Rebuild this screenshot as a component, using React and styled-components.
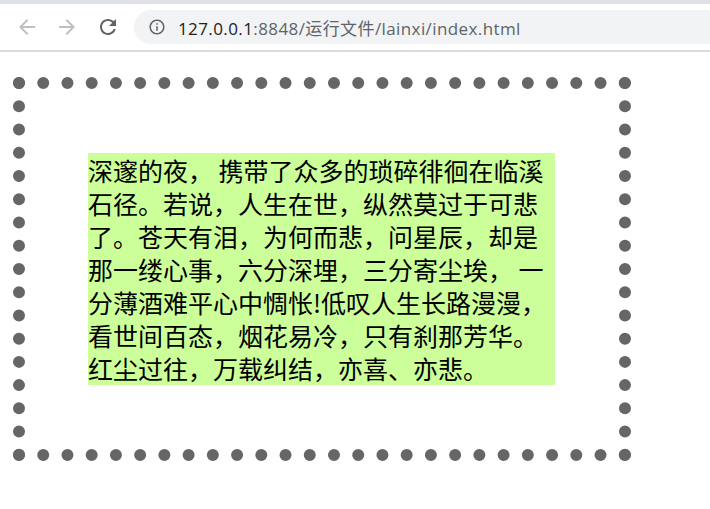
import React from 'react';
import styled, { createGlobalStyle } from 'styled-components';

const GlobalStyle = createGlobalStyle`
  html, body {
    margin: 0;
    padding: 0;
    background: #fff;
  }
  body {
    font-family: "Noto Sans CJK SC", "Noto Sans", sans-serif;
  }
`;

const Chrome = styled.header`
  border-top: 4px solid #dee1e6;
  border-bottom: 2px solid #dadce0;
  background: #fff;
`;

const Toolbar = styled.div`
  display: flex;
  align-items: center;
  height: 46px;
  padding-left: 15px;
`;

const NavButton = styled.span`
  display: flex;
  align-items: center;
  justify-content: center;
  width: 24px;
  height: 24px;
  margin-right: ${({ $gap }) => $gap}px;
  color: ${({ $disabled }) => ($disabled ? '#bdc1c6' : '#5f6368')};

  svg {
    display: block;
    width: 24px;
    height: 24px;
    fill: currentColor;
  }
`;

const Omnibox = styled.div`
  flex: 1;
  display: flex;
  align-items: center;
  gap: 12px;
  height: 34px;
  padding-left: 14px;
  border-radius: 17px 0 0 17px;
  background: #f1f3f4;
  color: #5f6368;

  svg {
    display: block;
    width: 18px;
    height: 18px;
    fill: currentColor;
  }
`;

const Url = styled.span`
  font-family: "Open Sans", "Noto Sans CJK SC", sans-serif;
  font-size: 17px;
  letter-spacing: 0.4px;
  color: #5f6368;
  white-space: nowrap;

  b {
    font-weight: 400;
    color: #202124;
  }
`;

const Page = styled.main`
  padding: 25px 0 0 13px;
`;

const DottedFrame = styled.div`
  width: 467px;
  padding: 64px 64px 64px 63px;
  border: 12px dotted #666;
`;

const Passage = styled.p`
  margin: 0;
  height: 232px;
  padding-top: 1px;
  box-sizing: border-box;
  background: #ccff99;
  color: #000;
  font-family: "Noto Sans CJK SC", sans-serif;
  font-size: 25px;
  line-height: 33px;
`;

const BackIcon = () => (
  <svg viewBox="0 0 24 24">
    <path d="M20 11H7.83l5.59-5.59L12 4l-8 8 8 8 1.41-1.41L7.83 13H20v-2z" />
  </svg>
);

const ForwardIcon = () => (
  <svg viewBox="0 0 24 24">
    <path d="M4 11h12.17l-5.59-5.59L12 4l8 8-8 8-1.41-1.41L16.17 13H4v-2z" />
  </svg>
);

const ReloadIcon = () => (
  <svg viewBox="0 0 24 24">
    <path d="M17.65 6.35C16.2 4.9 14.21 4 12 4c-4.42 0-7.990 3.58-7.99 8s3.57 8 7.99 8c3.73 0 6.84-2.55 7.730-6h-2.08c-.82 2.33-3.04 4-5.65 4-3.31 0-6-2.69-6-6s2.69-6 6-6c1.66 0 3.14.69 4.22 1.78L13 11h7V4l-2.35 2.35z" />
  </svg>
);

const InfoIcon = () => (
  <svg viewBox="0 0 24 24">
    <path d="M11 7h2v2h-2zm0 4h2v6h-2zm1-9C6.48 2 2 6.48 2 12s4.48 10 10 10 10-4.48 10-10S17.52 2 12 2zm0 18c-4.41 0-8-3.59-8-8s3.59-8 8-8 8 3.590 8 8-3.59 8-8 8z" />
  </svg>
);

const text =
  '深邃的夜， 携带了众多的琐碎徘徊在临溪石径。若说，人生在世，纵然莫过于可悲了。苍天有泪，为何而悲，问星辰，却是那一缕心事，六分深埋，三分寄尘埃， 一分薄酒难平心中惆怅!低叹人生长路漫漫，看世间百态，烟花易冷，只有刹那芳华。红尘过往，万载纠结，亦喜、亦悲。';

const App = () => (
  <>
    <GlobalStyle />
    <Chrome>
      <Toolbar>
        <NavButton $disabled $gap={16}>
          <BackIcon />
        </NavButton>
        <NavButton $disabled $gap={17}>
          <ForwardIcon />
        </NavButton>
        <NavButton $gap={14}>
          <ReloadIcon />
        </NavButton>
        <Omnibox>
          <InfoIcon />
          <Url>
            <b>127.0.0.1</b>:8848/运行文件/lainxi/index.html
          </Url>
        </Omnibox>
      </Toolbar>
    </Chrome>
    <Page>
      <DottedFrame>
        <Passage>{text}</Passage>
      </DottedFrame>
    </Page>
  </>
);

export default App;
